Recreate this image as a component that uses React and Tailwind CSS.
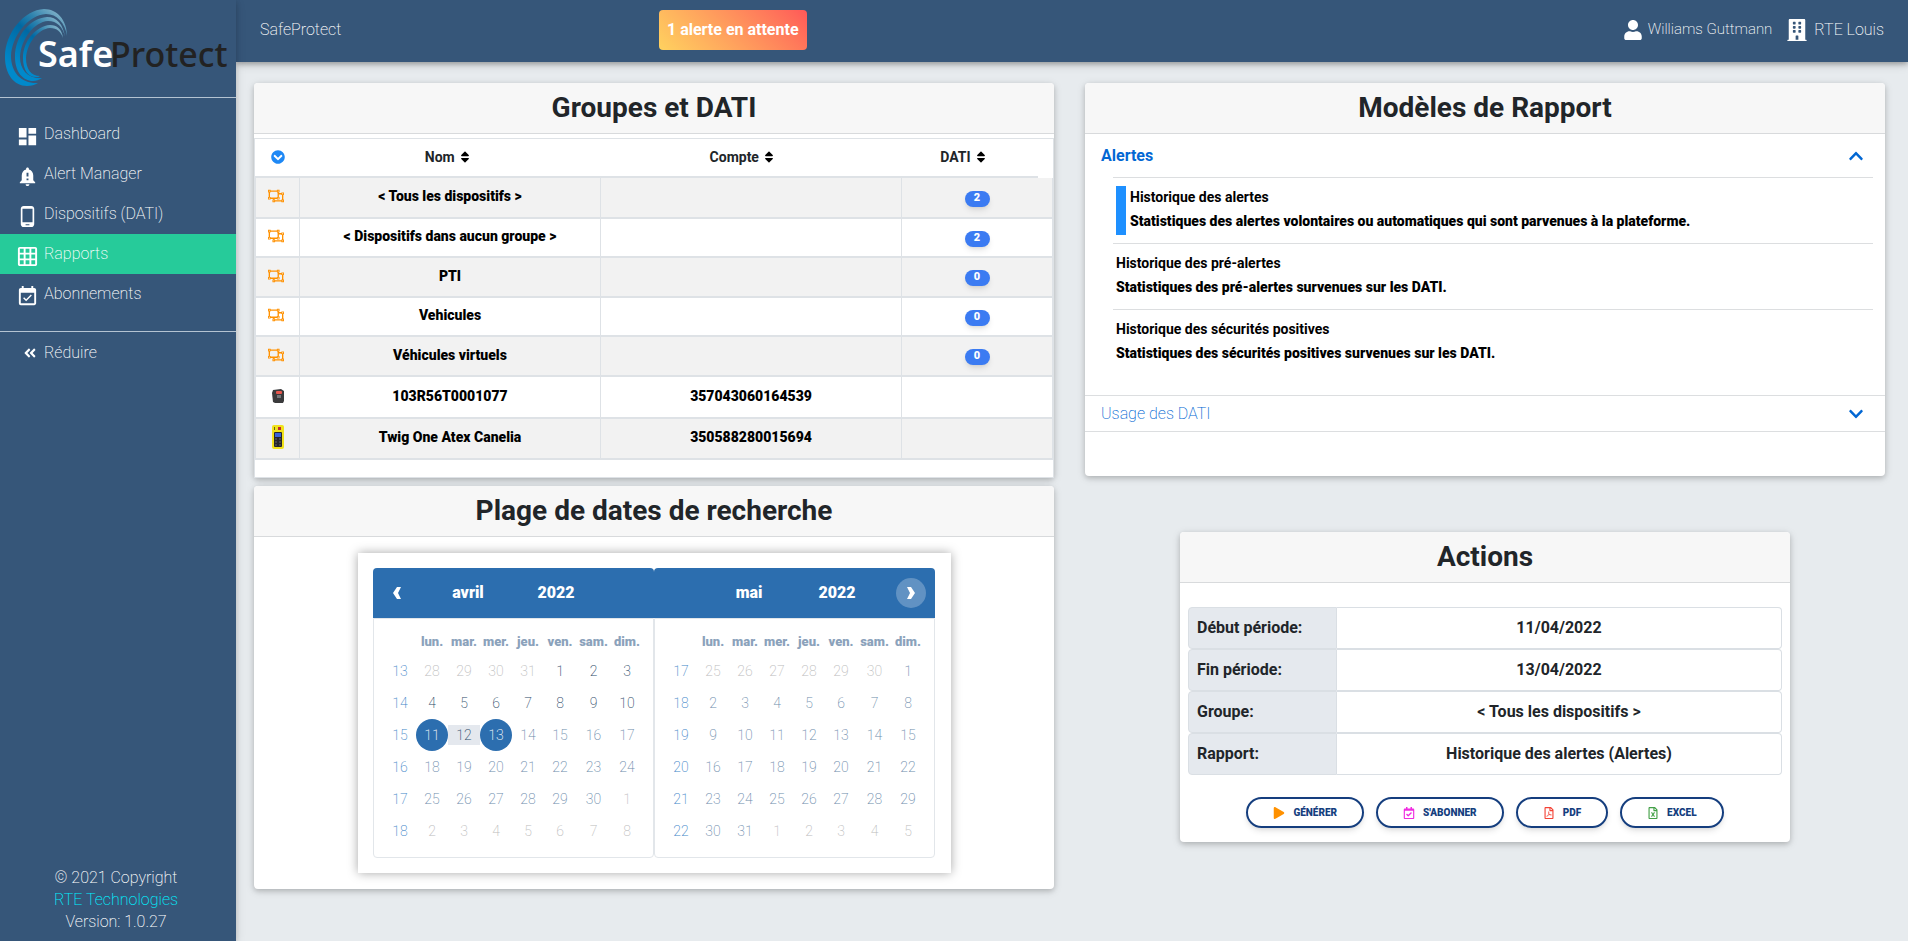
import { useState } from 'react';
import {
  MdDashboard,
  MdNotificationImportant,
  MdPhoneAndroid,
  MdGridOn,
  MdEventAvailable
} from 'react-icons/md';
import {
  FaAngleDoubleLeft,
  FaUser,
  FaBuilding,
  FaRegObjectUngroup,
  FaSort,
  FaChevronCircleDown,
  FaChevronUp,
  FaChevronDown,
  FaPlay,
  FaRegCalendarCheck,
  FaRegFilePdf,
  FaRegFileExcel
} from 'react-icons/fa';

const menu = [
  { label: 'Dashboard', icon: MdDashboard },
  { label: 'Alert Manager', icon: MdNotificationImportant },
  { label: 'Dispositifs (DATI)', icon: MdPhoneAndroid },
  { label: 'Rapports', icon: MdGridOn, active: true },
  { label: 'Abonnements', icon: MdEventAvailable }
];

const groupes = [
  { nom: '< Tous les dispositifs >', dati: 2 },
  { nom: '< Dispositifs dans aucun groupe >', dati: 2 },
  { nom: 'PTI', dati: 0 },
  { nom: 'Vehicules', dati: 0 },
  { nom: 'Véhicules virtuels', dati: 0 }
];

const rapports = [
  {
    nom: 'Historique des alertes',
    description: 'Statistiques des alertes volontaires ou automatiques qui sont parvenues à la plateforme.'
  },
  {
    nom: 'Historique des pré-alertes',
    description: 'Statistiques des pré-alertes survenues sur les DATI.'
  },
  {
    nom: 'Historique des sécurités positives',
    description: 'Statistiques des sécurités positives survenues sur les DATI.'
  }
];

const jours = ['lun.', 'mar.', 'mer.', 'jeu.', 'ven.', 'sam.', 'dim.'];

const Logo = () => (
  <svg className="block h-[97px] w-[236px]" viewBox="0 0 236 97" role="img" aria-label="SafeProtect">
    <defs>
      <linearGradient id="swoosh" x1="0.9" y1="0" x2="0.3" y2="0.9">
        <stop offset="0" stopColor="#8fb9cc" />
        <stop offset="0.3" stopColor="#2f83ae" />
        <stop offset="0.5" stopColor="#0069a3" />
        <stop offset="1" stopColor="#0089cb" />
      </linearGradient>
    </defs>
    <g fill="url(#swoosh)">
      <path d="M67 36C67 20 57 9 44 9C24 10 5 33 5 57C5 74 14 86 27 86C31 86 35 85 38 83C22 84 11 73 11 56C12 36 28 15 46 14C57 14 65 23 67 36Z" />
      <path d="M65 37C63 24 57 17 47 17C30 18 15 36 15 57C15 72 23 81 33 81C36 81 39 80 42 78C28 79 20 70 20 57C21 39 34 22 48 21C57 21 63 27 65 37Z" />
      <path d="M63 38C62 29 57 25 50 25C36 26 23 41 23 58C23 70 28 77 36 77C37 77 39 77 40 76C31 76 26 69 26 58C27 43 38 29 50 28C57 28 61 32 63 38Z" />
    </g>
    <text x="38" y="67" fontFamily="'Noto Sans', sans-serif" fontSize="36" fontWeight="600" fill="#ffffff">
      Safe
    </text>
    <text x="110" y="67" fontFamily="'Noto Sans', sans-serif" fontSize="34" fontWeight="500" fill="#222222">
      Protect
    </text>
  </svg>
);

const Balise = () => (
  <svg className="mx-auto h-[14px] w-[12px]" viewBox="0 0 12 14">
    <path d="M1 1L9 0L12 2V12L11 14H3L1 13L0 4Z" fill="#3a3a3c" />
    <rect x="4" y="2" width="6" height="3" rx="1" fill="#e8564d" />
    <rect x="5" y="6" width="4" height="3" fill="#77777b" />
  </svg>
);

const Twig = () => (
  <svg className="mx-auto h-6 w-[12px]" viewBox="0 0 12 24">
    <rect width="12" height="24" rx="2" fill="#f1e21b" />
    <rect x="6" y="2" width="3" height="3" fill="#c3272b" />
    <rect x="2" y="2" width="1" height="3" fill="#6b6714" />
    <rect x="2" y="7" width="8" height="15" rx="1" fill="#26262c" />
    <rect x="3" y="8" width="6" height="4" fill="#3a63d8" />
    <path d="M3 14h2M7 14h2M3 17h2M7 17h2M3 20h2M7 20h2" stroke="#66666e" />
  </svg>
);

const Card = ({ titre, className = '', children }) => (
  <section className={`rounded bg-white shadow-[0_2px_5px_0_rgba(0,0,0,0.16),0_2px_10px_0_rgba(0,0,0,0.12)] ${className}`}>
    <h3 className="flex h-[51px] items-center justify-center rounded-t border-b border-[#d8dadc] bg-[#f7f7f7] text-[28px] font-bold text-[#212529]">
      {titre}
    </h3>
    {children}
  </section>
);

const EnTete = ({ label, className = '' }) => (
  <th className={`border-b-2 border-[#dee2e6] pb-[2px] font-bold text-[#212529] ${className}`}>
    <button className="inline-flex items-center gap-[3px]">
      {label}
      <FaSort className="text-black" />
    </button>
  </th>
);

const TableGroupes = () => (
  <div className="mt-1 h-[340px] border border-[#dee2e6] text-center text-sm text-black">
    <div className="pr-[15px]">
      <table className="w-full table-fixed border-separate border-spacing-0">
        <thead>
          <tr className="h-[39px]">
            <th className="w-[46px] border-b-2 border-[#dee2e6] pb-[3px]">
              <button className="align-middle" aria-label="Tout ouvrir">
                <FaChevronCircleDown className="text-[#1e88f5]" />
              </button>
            </th>
            <EnTete label="Nom" />
            <EnTete label="Compte" />
            <EnTete label="DATI" className="w-[148px]" />
          </tr>
        </thead>
      </table>
    </div>
    <table className="w-full table-fixed border-collapse font-black [&_td]:border-x [&_td]:border-b-2 [&_td]:border-[#dee2e6] [&_td]:pb-[3px]">
      <colgroup>
        <col className="w-11" />
        <col />
        <col />
        <col className="w-[151px]" />
      </colgroup>
      <tbody>
        {groupes.map((g, i) => (
          <tr key={g.nom} className={i % 2 === 0 ? 'h-10 bg-[#f2f2f2]' : 'h-[39px] bg-white'}>
            <td className="pr-1">
              <FaRegObjectUngroup className="mx-auto text-base text-[#ff9100]" />
            </td>
            <td>{g.nom}</td>
            <td></td>
            <td>
              <span className="mx-auto mt-[5px] block h-4 w-[25px] rounded-full bg-[#3b7bf2] text-[11px] leading-[14px] text-white shadow-md">
                {g.dati}
              </span>
            </td>
          </tr>
        ))}
        <tr className="h-[42px]">
          <td><Balise /></td>
          <td>103R56T0001077</td>
          <td>357043060164539</td>
          <td></td>
        </tr>
        <tr className="h-[41px] bg-[#f2f2f2]">
          <td><Twig /></td>
          <td>Twig One Atex Canelia</td>
          <td>350588280015694</td>
          <td></td>
        </tr>
      </tbody>
    </table>
  </div>
);

const Modeles = () => {
  const [selected, setSelected] = useState(0);

  return (
    <div className="pb-11">
      <button className="flex h-[43px] w-full items-center justify-between pl-4 pr-[21px] font-bold text-[#0267d3]">
        Alertes
        <FaChevronUp />
      </button>
      <ul className="ml-7 mr-3 h-[218px] text-sm text-black">
        {rapports.map((r, i) => (
          <li key={r.nom} className="h-[66px] border-t border-[#dcdee0] px-[3px] pt-2">
            <button
              onClick={() => setSelected(i)}
              className={`block h-[49px] pb-[3px] text-left ${i === selected ? 'border-l-10 border-[#1e90ff] pl-1' : ''}`}
            >
              <span className="block h-6 font-bold leading-[22px]">{r.nom}</span>
              <span className="block font-black leading-[22px]">{r.description}</span>
            </button>
          </li>
        ))}
      </ul>
      <button className="flex h-[37px] w-full items-center justify-between border-y border-[#dcdee0] pl-4 pr-[21px] font-extralight text-[#0267d3]">
        Usage des DATI
        <FaChevronDown />
      </button>
    </div>
  );
};

// Construit les 6 semaines affichées à partir du premier lundi
const getSemaines = (year, month, firstDay) => {
  return [0, 1, 2, 3, 4, 5].map(s =>
    [0, 1, 2, 3, 4, 5, 6].map(j => new Date(year, month, firstDay + s * 7 + j))
  );
};

const getDayClass = (date, month) => {
  const day = date.getDate();
  if (date.getMonth() !== month) return 'text-[#bdbdbd]';
  if (month === 3 && (day === 11 || day === 13)) return 'rounded-full bg-[#2c6eaf] text-white';
  if (month === 3 && day < 13) return 'text-[#2d4a68]';
  return 'text-[#6d8cab]';
};

const Mois = ({ nom, month, firstDay, firstWeek, prev, next }) => (
  <div className="w-[281px]">
    <div className="flex h-[50px] items-center rounded-t bg-[#2c6eaf] px-[9px] text-base font-black text-white">
      <div className="w-[30px]">
        {prev && (
          <button className="flex h-[30px] w-[30px] items-center justify-center rounded-full" aria-label="Mois précédent">
            <svg className="h-3 w-2" viewBox="0 0 8 12" fill="currentColor">
              <path d="M4 0H8L5 6L8 12H4L0 6Z" />
            </svg>
          </button>
        )}
      </div>
      <button className="w-[112px] text-center">{nom}</button>
      <button className="w-[64px] text-center">2022</button>
      <div className="ml-auto w-[30px]">
        {next && (
          <button className="flex h-[30px] w-[30px] items-center justify-center rounded-full bg-white/25" aria-label="Mois suivant">
            <svg className="h-3 w-2" viewBox="0 0 8 12" fill="currentColor">
              <path d="M4 0H0L3 6L0 12H4L8 6Z" />
            </svg>
          </button>
        )}
      </div>
    </div>
    <div className="h-[240px] rounded-b border border-[#e2e6ea] px-[10px] pt-2">
      <table className="w-full table-fixed text-center text-sm font-extralight">
        <colgroup>
          <col className="w-8" />
          <col className="w-8" />
          <col className="w-8" />
          <col className="w-8" />
          <col className="w-8" />
          <col className="w-8" />
          <col className="w-[35px]" />
          <col className="w-8" />
        </colgroup>
        <thead>
          <tr className="h-[28px] text-[13px] text-[#8ba2bb]">
            <th></th>
            {jours.map(j => (
              <th key={j} className="whitespace-nowrap pt-[2px] font-black">{j}</th>
            ))}
          </tr>
        </thead>
        <tbody>
          {getSemaines(2022, month, firstDay).map((semaine, i) => (
            <tr key={i} className="h-8">
              <td className="text-[#3f87c9]">{firstWeek + i}</td>
              {semaine.map((date, j) => {
                const inRange = month === 3 && date.getMonth() === 3 && date.getDate() === 12;
                return (
                  <td key={j}>
                    <button
                      className={`block w-full ${
                        inRange ? 'h-5 bg-[#e4e8ee]' : 'mx-auto h-8 max-w-8'
                      } ${getDayClass(date, month)}`}
                    >
                      {date.getDate()}
                    </button>
                  </td>
                );
              })}
            </tr>
          ))}
        </tbody>
      </table>
    </div>
  </div>
);

const ActionRow = ({ label, value }) => (
  <tr className="h-[42px]">
    <th scope="row" className="w-[149px] rounded-l border border-[#dadfe4] bg-[#e5e9ee] px-2 text-left">{label}</th>
    <td className="rounded-r border border-l-0 border-[#dadfe4] text-center">{value}</td>
  </tr>
);

const ActionButton = ({ icon: Icon, color, children }) => (
  <button className="flex h-[31px] items-center gap-2 rounded-full border-2 border-[#153e7e] px-[25px] text-[10px] font-black text-[#153e7e] shadow-md">
    <Icon className={`text-xs ${color}`} />
    {children}
  </button>
);

const App = () => {
  return (
    <div className="flex min-h-screen bg-[#e7ebee] font-['Roboto','Noto_Sans',sans-serif]">
      {/* Menu latéral */}
      <aside className="z-10 flex w-[236px] shrink-0 flex-col bg-[#365679] font-extralight text-white shadow-[0_2px_5px_0_rgba(0,0,0,0.16),0_2px_10px_0_rgba(0,0,0,0.12)]">
        <Logo />
        <nav className="border-y border-[#b4c3d2] pb-[17px] pt-4">
          {menu.map(({ label, icon: Icon, active }) => (
            <a
              key={label}
              href="#"
              className={`flex h-10 items-center gap-[5px] pl-4 ${active ? 'bg-[#26cb9a]' : ''}`}
            >
              <Icon className="mt-1 text-[23px]" />
              {label}
            </a>
          ))}
        </nav>
        <button className="flex h-[42px] items-center gap-[7px] pl-[23px]">
          <FaAngleDoubleLeft className="text-sm" />
          Réduire
        </button>
        <footer className="mt-auto pb-2 pr-1 text-center leading-[22px]">
          <p>© 2021 Copyright</p>
          <a href="#" className="text-[#00f0ff]">RTE Technologies</a>
          <p>Version: 1.0.27</p>
        </footer>
      </aside>

      <div className="flex-1">
        {/* Barre supérieure */}
        <header className="flex h-[62px] items-center bg-[#365679] pb-[3px] pl-6 pr-6 font-extralight text-white shadow-[0_2px_5px_0_rgba(0,0,0,0.26),0_2px_10px_0_rgba(0,0,0,0.16)]">
          <div className="w-[399px]">SafeProtect</div>
          <button className="h-10 rounded bg-linear-45 from-[#ffd25f] to-[#ff5858] px-2 font-bold">
            1 alerte en attente
          </button>
          <a href="#" className="ml-auto flex items-center gap-[5px] text-[15px]">
            <FaUser className="text-xl" />
            Williams Guttmann
          </a>
          <a href="#" className="ml-[14px] flex items-center gap-[6px]">
            <FaBuilding className="text-[22px]" />
            RTE Louis
          </a>
        </header>

        <main className="grid grid-cols-2 items-start gap-[31px] pl-[18px] pr-[23px] pt-[21px]">
          <div className="space-y-2">
            <Card titre="Groupes et DATI">
              <TableGroupes />
            </Card>
            <Card titre="Plage de dates de recherche" className="pb-4">
              <div className="mx-auto mt-4 flex w-[593px] justify-center bg-white p-[15px] shadow-[0_0_10px_0_rgba(0,0,0,0.35)]">
                <Mois nom="avril" month={3} firstDay={-3} firstWeek={13} prev />
                <Mois nom="mai" month={4} firstDay={-5} firstWeek={17} next />
              </div>
            </Card>
          </div>

          <div>
            <Card titre="Modèles de Rapport">
              <Modeles />
            </Card>
            <Card titre="Actions" className="mx-[95px] mt-14 pb-[14px]">
              <div className="px-2 pt-6">
                <table className="w-full border-separate border-spacing-0 font-bold text-[#212529]">
                  <tbody>
                    <ActionRow label="Début période:" value="11/04/2022" />
                    <ActionRow label="Fin période:" value="13/04/2022" />
                    <ActionRow label="Groupe:" value="< Tous les dispositifs >" />
                    <ActionRow label="Rapport:" value="Historique des alertes (Alertes)" />
                  </tbody>
                </table>
                <div className="mt-[22px] flex justify-center gap-3">
                  <ActionButton icon={FaPlay} color="text-[#ff9100]">GÉNÉRER</ActionButton>
                  <ActionButton icon={FaRegCalendarCheck} color="text-[#f02be0]">S'ABONNER</ActionButton>
                  <ActionButton icon={FaRegFilePdf} color="text-[#f44336]">PDF</ActionButton>
                  <ActionButton icon={FaRegFileExcel} color="text-[#43a047]">EXCEL</ActionButton>
                </div>
              </div>
            </Card>
          </div>
        </main>
      </div>
    </div>
  );
};

export default App;
